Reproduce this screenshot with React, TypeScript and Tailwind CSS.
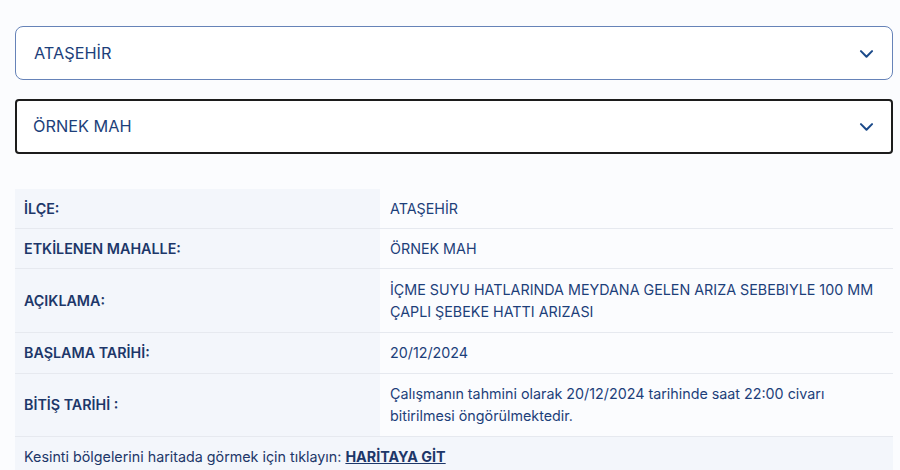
import React from 'react';

const ChevronDown = () => (
  <svg width="19" height="19" viewBox="0 0 24 24" fill="none" stroke="#1b4a8a" strokeWidth="2.6" strokeLinecap="round" strokeLinejoin="round">
    <path d="M5 9l7 7 7-7" />
  </svg>
);

const rows: { label: string; value: React.ReactNode; h: string }[] = [
  { label: 'İLÇE:', value: 'ATAŞEHİR', h: 'h-[40px]' },
  { label: 'ETKİLENEN MAHALLE:', value: 'ÖRNEK MAH', h: 'h-[40px]' },
  {
    label: 'AÇIKLAMA:',
    value: 'İÇME SUYU HATLARINDA MEYDANA GELEN ARIZA SEBEBIYLE 100 MM ÇAPLI ŞEBEKE HATTI ARIZASI',
    h: 'h-[64px]',
  },
  { label: 'BAŞLAMA TARİHİ:', value: '20/12/2024', h: 'h-[41px]' },
  {
    label: 'BİTİŞ TARİHİ :',
    value: 'Çalışmanın tahmini olarak 20/12/2024 tarihinde saat 22:00 civarı bitirilmesi öngörülmektedir.',
    h: 'h-[63px]',
  },
];

export default function App() {
  return (
    <div
      className="min-h-[470px] w-[900px] bg-[#fbfcfe] pl-[15px] pr-[7px] pt-[26px] text-[#1d3769]"
      style={{ fontFamily: 'Inter, "Noto Sans", sans-serif' }}
    >
      <div className="flex flex-col gap-[19px]">
        <div className="flex h-[54px] items-center justify-between rounded-[8px] border border-[#6683b8] bg-white pl-[18px] pr-[16px]">
          <span className="text-[16.3px] text-[#1d3f7a]">ATAŞEHİR</span>
          <ChevronDown />
        </div>
        <div className="flex h-[55px] items-center justify-between rounded-[4px] border-2 border-[#1c1c1c] bg-white pl-[16px] pr-[15px]">
          <span className="text-[16.3px] text-[#1d3f7a]">ÖRNEK MAH</span>
          <ChevronDown />
        </div>
      </div>

      <div className="mt-[35px] text-[14.3px]">
        {rows.map((r, i) => (
          <div key={i} className={`grid grid-cols-[365px_1fr] border-b border-[#e6e9ef] ${r.h}`}>
            <div className="flex items-center bg-[#f3f6fb] pl-[9px] font-semibold text-[#1d3769]">{r.label}</div>
            <div className="flex items-center pl-[10px] pr-[16px] leading-[22px] text-[#1d3f7a]">{r.value}</div>
          </div>
        ))}
        <div className="flex h-[40px] items-center bg-[#f3f6fb] pl-[9px] text-[#1d3769]">
          Kesinti bölgelerini haritada görmek için tıklayın:&nbsp;
          <a href="#" className="font-bold underline">HARİTAYA GİT</a>
        </div>
      </div>
    </div>
  );
}
